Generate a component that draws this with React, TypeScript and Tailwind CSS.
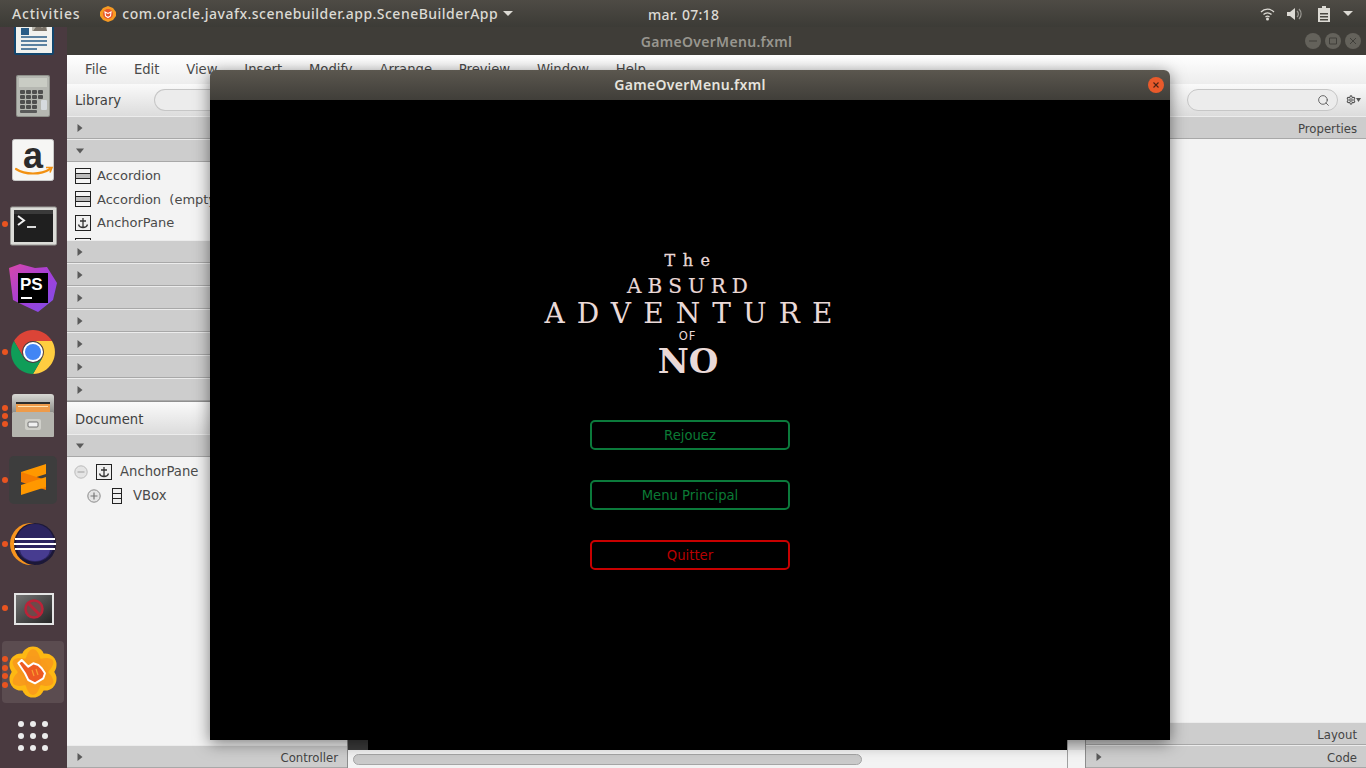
import { Search, Settings } from "lucide-react";

const RowArrow = ({ open }: { open?: boolean }) => (
  <svg width="8" height="8" viewBox="0 0 8 8" className="shrink-0">
    {open ? <path d="M0 1.5h8L4 6.5z" fill="#5a5a5a" /> : <path d="M1.5 0v8L6.5 4z" fill="#5a5a5a" />}
  </svg>
);

const PanelRow = ({ open, label }: { open?: boolean; label?: string }) => (
  <div className="flex h-[23px] shrink-0 items-center justify-between border-t border-b border-t-[#ececec] border-b-[#a8a8a8] bg-[#cdcdcd] pl-[9px] pr-[9px] text-[#444]">
    <RowArrow open={open} />
    {label && <span className="pt-[4px] text-[11.7px]">{label}</span>}
  </div>
);

const PanelHeader = ({ title }: { title: string }) => (
  <div className="flex h-[32px] shrink-0 items-center bg-gradient-to-b from-[#fafafa] to-[#dcdcdc] pl-2 text-[13.2px] text-[#3f3f3f]">
    <span className="pt-[2px]">{title}</span>
    <div className="ml-[33px] h-[22px] flex-1 rounded-l-full border border-r-0 border-[#c6c6c6] bg-[#ececec]" />
  </div>
);

const GridIcon = () => (
  <svg width="16" height="16" viewBox="0 0 16 16" className="shrink-0">
    <rect x="0.5" y="0.5" width="15" height="15" fill="#f4f4f4" stroke="#222" />
    <path d="M1 5.5h14M1 10.5h14" stroke="#222" />
    <rect x="1" y="6" width="14" height="4" fill="#bbb" />
  </svg>
);

const AnchorIcon = () => (
  <svg width="16" height="16" viewBox="0 0 16 16" className="shrink-0">
    <rect x="0.5" y="0.5" width="15" height="15" fill="#f0f0f0" stroke="#222" />
    <path d="M8 3v9M5 6h6M3.5 9.5c.5 2 2.5 3 4.5 3s4-1 4.5-3" fill="none" stroke="#333" strokeWidth="1.3" />
  </svg>
);

const VBoxIcon = () => (
  <svg width="10" height="16" viewBox="0 0 10 16" className="shrink-0">
    <rect x="0.5" y="0.5" width="9" height="15" fill="#eee" stroke="#222" />
    <path d="M0 5.5h10M0 10.5h10" stroke="#222" />
  </svg>
);

const LibraryItem = ({ label }: { label: string }) => (
  <div className="flex h-[23.5px] items-center gap-[6px] pl-2 text-[13px] whitespace-pre text-[#4a4a4a]">
    {label === "AnchorPane" ? <AnchorIcon /> : <GridIcon />}
    {label}
  </div>
);

const TreeToggle = ({ plus }: { plus?: boolean }) => (
  <svg width="14" height="14" viewBox="0 0 14 14" className="shrink-0">
    <circle cx="7" cy="7" r="6.2" fill="#e4e4e4" stroke={plus ? "#8a8a8a" : "#bbb"} />
    <path d={plus ? "M3.5 7h7M7 3.5v7" : "M3.5 7h7"} stroke={plus ? "#777" : "#aaa"} strokeWidth="1.2" />
  </svg>
);

const DockItem = ({ dots = 0, active, children }: { dots?: number; active?: boolean; children?: React.ReactNode }) => (
  <div className="relative flex h-16 w-[67px] shrink-0 items-center justify-center pr-[1px]">
    {active && <div className="absolute top-[1px] left-[2px] h-[62px] w-[62px] rounded-[4px] bg-[#5b4c50]" />}
    {dots > 0 && (
      <div className="absolute top-0 bottom-0 left-[2px] flex flex-col justify-center gap-[2.4px]">
        {Array.from({ length: dots }).map((_, i) => (
          <div key={i} className="h-[6px] w-[6px] rounded-full bg-[#e95420]" />
        ))}
      </div>
    )}
    <svg width="64" height="64" viewBox="0 0 64 64" className="relative">
      {children}
    </svg>
  </div>
);

const Dock = () => (
  <div className="flex w-[67px] shrink-0 flex-col overflow-hidden bg-[#4a3a40]">
    <div className="-mt-[27px]">
      <DockItem>
        <rect x="13" y="8" width="40" height="47" rx="2" fill="#12466e" />
        <rect x="15" y="10" width="36" height="43" fill="#f1f1ee" />
        <rect x="20" y="28" width="8" height="7" fill="#2a5c86" />
        <path d="M31 19h15v12H31z" fill="#b8b6ac" />
        <path d="M32 31l5-7 4 4 3-3 2 6z" fill="#7a7268" />
        <path d="M20 37h26M20 41h26M20 45h26M20 49h16" stroke="#2a5c86" strokeWidth="1.6" />
      </DockItem>
      <DockItem>
        <rect x="15" y="11" width="34" height="42" rx="2" fill="#8f918b" />
        <rect x="16" y="12" width="32" height="40" rx="1.5" fill="#b5b7b1" />
        <rect x="18" y="14" width="28" height="9" fill="#c9ccc4" />
        {[26, 31, 36, 41].map((y) =>
          [19, 25, 31].map((x) => <rect key={`${x}-${y}`} x={x} y={y} width="5" height="4" rx="1" fill="#4f4f4f" />),
        )}
        <rect x="37" y="26" width="5" height="4" rx="1" fill="#4f4f4f" />
        <rect x="37" y="31" width="5" height="4" rx="1" fill="#4f4f4f" />
        <rect x="40" y="36" width="6" height="10" rx="1" fill="#d5dade" />
        <rect x="19" y="46" width="17" height="3" rx="1" fill="#5a5a5a" />
      </DockItem>
      <DockItem>
        <rect x="11.5" y="11.5" width="41" height="41" rx="2" fill="#f6f6f4" stroke="#c8c8c8" />
        <text x="32" y="40" textAnchor="middle" fontFamily="'Liberation Sans', sans-serif" fontWeight="700" fontSize="36" fill="#2b2b2b">a</text>
        <path d="M15 41c9 6 25 6 34 0" fill="none" stroke="#f29111" strokeWidth="2.2" strokeLinecap="round" />
        <path d="M45 39.500l6 0-2 5" fill="none" stroke="#f29111" strokeWidth="1.6" />
      </DockItem>
      <DockItem dots={1}>
        <rect x="9.500" y="15" width="46" height="38" rx="1.500" fill="#dcdcd8" stroke="#9c9c98" />
        <rect x="13" y="18" width="39" height="32" fill="#1f1f1f" />
        <rect x="13" y="18" width="39" height="4" fill="#3a3a3a" />
        <path d="M17 24l6 4.500-6 4.500" fill="none" stroke="#f0f0f0" strokeWidth="2" />
        <path d="M26 35h9" stroke="#f0f0f0" strokeWidth="1.800" />
      </DockItem>
      <DockItem>
        <defs>
          <linearGradient id="ps" x1="0" y1="0" x2="1" y2="1">
            <stop offset="0" stopColor="#d848a8" />
            <stop offset="0.5" stopColor="#a63ed8" />
            <stop offset="1" stopColor="#7a50e8" />
          </linearGradient>
        </defs>
        <path d="M8 12l11-4 15 4 12-1 10 16-4 17-15 12-15-7-10-5z" fill="url(#ps)" />
        <rect x="17" y="17" width="30" height="30" fill="#000" />
        <text x="19" y="34" fontFamily="'Liberation Sans', sans-serif" fontWeight="700" fontSize="17" fill="#fff">PS</text>
        <rect x="20" y="41" width="11" height="2" fill="#fff" />
      </DockItem>
      <DockItem dots={1}>
        <path d="M13 21A22 22 0 0 1 51 21H32A11 11 0 0 0 22.500 37.500z" fill="#db4437" />
        <path d="M51 21A22 22 0 0 1 32 54L41.500 37.500A11 11 0 0 0 32 21z" fill="#ffcd40" />
        <path d="M32 54A22 22 0 0 1 13 21L22.500 37.500A11 11 0 0 0 41.500 37.500z" fill="#0f9d58" />
        <circle cx="32" cy="32" r="10" fill="#fff" />
        <circle cx="32" cy="32" r="8" fill="#4285f4" />
      </DockItem>
      <DockItem dots={3}>
        <defs>
          <linearGradient id="drawer" x1="0" y1="0" x2="0" y2="1">
            <stop offset="0" stopColor="#d8d8d4" />
            <stop offset="1" stopColor="#8f8f8b" />
          </linearGradient>
        </defs>
        <path d="M11 13a3 3 0 0 1 3-3h36a3 3 0 0 1 3 3v15H11z" fill="url(#drawer)" />
        <rect x="15" y="18" width="34" height="11" fill="#2c2c2c" />
        <rect x="15" y="20" width="34" height="9" fill="#ee9b4a" />
        <path d="M17 22.500h30" stroke="#ffe1ae" strokeWidth="1" />
        <rect x="11" y="28" width="42" height="25" rx="1" fill="#b4b4ae" />
        <rect x="24" y="35" width="16" height="11" rx="2" fill="#d0d0ca" />
        <rect x="27" y="38" width="10" height="5" rx="1" fill="#f0f0f0" stroke="#555" strokeWidth="0.8" />
      </DockItem>
      <DockItem dots={1}>
        <rect x="8" y="8" width="48" height="48" rx="5" fill="#3d3d3d" />
        <path d="M20 24l25-8v10l-25 8z" fill="#ff9800" />
        <path d="M20 24l25 8v10l-25-8z" fill="#f57c00" />
        <path d="M20 37l25-8v10l-25 8z" fill="#ff9800" />
      </DockItem>
      <DockItem dots={1}>
        <circle cx="30" cy="32" r="21" fill="#f7941e" />
        <circle cx="34" cy="32" r="21" fill="#1c1838" />
        <circle cx="34" cy="31" r="19" fill="#2c2560" />
        <path d="M19 37a15 12 0 0 0 30 0z" fill="#473c90" />
        <path d="M14 27h40M13 32h42M14 37h40" stroke="#fff" strokeWidth="2" />
      </DockItem>
      <DockItem dots={1}>
        <defs>
          <linearGradient id="blocked" x1="0" y1="0" x2="1" y2="1">
            <stop offset="0" stopColor="#737373" />
            <stop offset="1" stopColor="#262626" />
          </linearGradient>
        </defs>
        <rect x="13" y="17" width="40" height="32" fill="#e4e4e4" />
        <rect x="15" y="19" width="36" height="28" fill="url(#blocked)" />
        <circle cx="33" cy="33" r="8.500" fill="#6e4a4a" stroke="#bb2338" strokeWidth="2.500" />
        <path d="M27 27l12 12" stroke="#bb2338" strokeWidth="3" />
      </DockItem>
      <DockItem dots={4} active>
        {[
          [32, 18],
          [44, 25],
          [44, 39],
          [32, 46],
          [20, 39],
          [20, 25],
        ].map(([cx, cy]) => (
          <circle key={`${cx}-${cy}`} cx={cx} cy={cy} r="11.500" fill="#fdb813" />
        ))}
        <circle cx="32" cy="32" r="16" fill="#fbb016" />
        <ellipse cx="32" cy="32" rx="9" ry="23" fill="#f7941e" opacity="0.75" />
        <ellipse cx="32" cy="32" rx="9" ry="23" fill="#f7941e" opacity="0.75" transform="rotate(60 32 32)" />
        <ellipse cx="32" cy="32" rx="9" ry="23" fill="#f7941e" opacity="0.75" transform="rotate(120 32 32)" />
        <path d="M17.300 23.300L20.700 20L27.300 26.700L32.300 23.300L37.300 25L40.700 28.300L44 33.300L42.300 38.300L34 43.300L27.300 40L24 33.300z" fill="#ee5a22" stroke="#fff" strokeWidth="2" strokeLinejoin="round" />
        <path d="M31 30l2 6M35 29l2 6" stroke="#f8a030" strokeWidth="1.200" />
      </DockItem>
      <DockItem>
        {[20, 32, 44].map((y) =>
          [20, 32, 44].map((x) => <circle key={`${x}-${y}`} cx={x} cy={y} r="3" fill="#ececec" />),
        )}
      </DockItem>
    </div>
  </div>
);

const LeftPanel = () => (
  <div className="flex w-[280px] shrink-0 flex-col bg-[#f3f3f3]">
    <PanelHeader title="Library" />
    <PanelRow />
    <PanelRow open />
    <div className="h-[78px] shrink-0 overflow-hidden pt-[2px]">
      <LibraryItem label="Accordion" />
      <LibraryItem label="Accordion  (empty)" />
      <LibraryItem label="AnchorPane" />
      <div className="mt-[3px] pl-2"><GridIcon /></div>
    </div>
    {[0, 1, 2, 3, 4, 5, 6].map((i) => (
      <PanelRow key={i} />
    ))}
    <div className="flex h-[33px] shrink-0 items-center border-t border-[#8f8f8f] bg-gradient-to-b from-[#fafafa] to-[#dcdcdc] pt-[3px] pl-2 text-[13.2px] text-[#3f3f3f]">
      Document
    </div>
    <PanelRow open />
    <div className="flex h-[24px] items-center pt-[6px] pl-[7px] text-[13.2px] text-[#4a4a4a]">
      <TreeToggle />
      <div className="ml-[8px] mr-[8px]"><AnchorIcon /></div>
      AnchorPane
    </div>
    <div className="flex h-[24px] items-center pt-[5px] pl-[20px] text-[13.2px] text-[#4a4a4a]">
      <TreeToggle plus />
      <div className="ml-[11px] mr-[11px]"><VBoxIcon /></div>
      VBox
    </div>
    <div className="flex-1" />
    <PanelRow label="Controller" />
  </div>
);

const Center = () => (
  <div className="flex min-w-0 flex-1 flex-col border-l border-[#8d8d8d]">
    <div className="flex flex-1">
      <div className="w-[20px] bg-[#3a3a3a]" />
      <div className="flex-1 bg-black" />
      <div className="w-[18px] border-l border-[#a0a0a0] bg-[#dedede]" />
    </div>
    <div className="flex h-[18px] shrink-0 items-center bg-[#f3f3f3] pl-[5px]">
      <div className="h-[11px] w-[509px] rounded-full border border-[#a5a5a5] bg-[#cacaca]" />
      <div className="ml-auto h-full w-[18px] border-l border-[#a0a0a0]" />
    </div>
  </div>
);

const RightPanel = () => (
  <div className="flex w-[281px] shrink-0 flex-col border-l border-[#8d8d8d] bg-[#f3f3f3]">
    <div className="flex h-[32px] shrink-0 items-center bg-gradient-to-b from-[#fafafa] to-[#dcdcdc] pl-[101px]">
      <div className="flex h-[22px] w-[151px] items-center justify-end rounded-full border border-[#c6c6c6] bg-[#ececec] pr-[7px]">
        <Search size={13} strokeWidth={1.6} color="#555" />
      </div>
      <Settings size={10} strokeWidth={2.6} color="#555" className="ml-[8px]" />
      <svg width="5" height="4" viewBox="0 0 5 4"><path d="M0 0h5L2.500 4z" fill="#555" /></svg>
    </div>
    <PanelRow label="Properties" />
    <div className="flex-1" />
    <PanelRow label="Layout" />
    <PanelRow label="Code" />
  </div>
);

const SceneWindowButton = ({ d }: { d: string }) => (
  <svg width="16" height="16" viewBox="0 0 16 16">
    <circle cx="8" cy="8" r="8" fill="#64625b" />
    <path d={d} fill="none" stroke="#403f3a" strokeWidth="1" />
  </svg>
);

const MENU_ITEMS = ["File", "Edit", "View", "Insert", "Modify", "Arrange", "Preview", "Window", "Help"];

const GameOverWindow = () => (
  <div className="absolute top-[70px] left-[210px] flex h-[670px] w-[960px] flex-col overflow-hidden rounded-t-[6px] shadow-[0_3px_16px_rgba(0,0,0,0.5)]">
    <div className="relative flex h-[30px] shrink-0 items-center justify-center bg-gradient-to-b from-[#5b574f] to-[#403e39] pb-[1px] font-['Noto_Sans',sans-serif] text-[14px] font-semibold tracking-[0.3px] text-[#e6e4de]">
      GameOverMenu.fxml
      <div className="absolute top-[7px] right-[6px] flex h-4 w-4 items-center justify-center rounded-full bg-[#e95a2b]">
        <svg width="8" height="8" viewBox="0 0 8 8"><path d="M1.500 1.500l5 5M6.500 1.500l-5 5" stroke="#4a2315" strokeWidth="1.100" /></svg>
      </div>
    </div>
    <div className="flex flex-1 flex-col items-center bg-black pt-[149px] font-['DejaVu_Sans',sans-serif]">
      <div className="flex flex-col items-center font-['DejaVu_Serif',serif] text-[#ead9d7]">
        <div className="-mr-[2px] h-[24px] text-[16px] leading-[24px] tracking-[7.5px] [-webkit-text-stroke:0.3px_#ead9d7]">The</div>
        <div className="-mr-[1px] h-[25px] text-[20px] leading-[26px] tracking-[6px] [-webkit-text-stroke:0.2px_#ead9d7]">ABSURD</div>
        <div className="-mr-[9px] h-[32px] text-[28px] leading-[31px] tracking-[12.1px]">ADVENTURE</div>
        <div className="mr-[5px] h-[10px] font-['DejaVu_Sans',sans-serif] text-[11.5px] leading-[12px] tracking-[0.8px]">OF</div>
        <div className="-ml-[4px] h-[42px] text-[34px] leading-[42px] font-bold">NO</div>
      </div>
      <div className="mt-[38px] flex flex-col gap-[30px] text-[13.2px]">
        <button className="h-[30px] w-[200px] rounded-[5px] border-2 border-[#0b7a3b] pt-[1px] text-[#0b7a35]">Rejouez</button>
        <button className="h-[30px] w-[200px] rounded-[5px] border-2 border-[#0b7a3b] pt-[1px] text-[#0b7a35]">Menu Principal</button>
        <button className="h-[30px] w-[200px] rounded-[5px] border-2 border-[#c80000] pt-[1px] text-[#b80000]">Quitter</button>
      </div>
    </div>
  </div>
);

export default function App() {
  return (
    <div className="relative flex h-[768px] w-[1366px] flex-col overflow-hidden font-['DejaVu_Sans',sans-serif]">
      <div className="flex h-[27px] shrink-0 items-center bg-gradient-to-b from-[#4e4b45] to-[#3c3b36] pl-[12px] font-['Noto_Sans',sans-serif] text-[14px] font-medium text-[#dcdad4]">
        <span className="tracking-[0.8px]">Activities</span>
        <svg width="18" height="18" viewBox="0 0 18 18" className="ml-[19px]">
          <path d="M9 1l5 2 3 4v4l-3 4-5 2-5-2-3-4V7l3-4z" fill="#f59a23" />
          <circle cx="9" cy="9" r="5" fill="#e8552c" />
          <path d="M6 7l3 1.500L12 7l-.500 4L9 12.500 6.500 11z" fill="none" stroke="#fff" strokeWidth="1.100" />
        </svg>
        <span className="ml-[5px] tracking-[0.48px]">com.oracle.javafx.scenebuilder.app.SceneBuilderApp</span>
        <svg width="10" height="5" viewBox="0 0 10 5" className="ml-[5px]"><path d="M0 0h10L5 5z" fill="#dcdad4" /></svg>
        <span className="absolute top-[4px] left-[648px] tracking-[0.3px]">mar. 07:18</span>
        <div className="ml-auto flex items-center pr-[13px]">
          <svg width="15" height="14" viewBox="0 0 15 14"><path d="M1 5a9 9 0 0 1 13 0M3.500 7.500a6 6 0 0 1 8 0M5.500 10a3 3 0 0 1 4 0" fill="none" stroke="#dcdad4" strokeWidth="1.300" /><circle cx="7.500" cy="12" r="1.500" fill="#dcdad4" /></svg>
          <svg width="16" height="14" viewBox="0 0 16 14" className="ml-[12px]"><path d="M0 5h3l5-4v12L3 9H0z" fill="#dcdad4" /><path d="M10 4a4 4 0 0 1 0 6M12 2a7 7 0 0 1 0 10" fill="none" stroke="#9c9a94" strokeWidth="1.200" /></svg>
          <svg width="12" height="16" viewBox="0 0 12 16" className="ml-[15px]"><path d="M4 0h4v2h4v14H0V2h4z" fill="#dcdad4" /><path d="M2 7h8v1.500H2zM2 10h8v1.500H2zM2 13h8v1.500H2z" fill="#4a4842" /></svg>
          <svg width="10" height="5" viewBox="0 0 10 5" className="ml-[13px]"><path d="M0 0h10L5 5z" fill="#dcdad4" /></svg>
        </div>
      </div>
      <div className="flex min-h-0 flex-1">
        <Dock />
        <div className="flex min-w-0 flex-1 flex-col">
          <div className="relative flex h-[28px] shrink-0 items-center justify-center bg-[#3f3d38] font-['Noto_Sans',sans-serif] text-[14px] font-semibold tracking-[0.3px] text-[#98968f]">
            GameOverMenu.fxml
            <div className="absolute top-[6px] right-[5px] flex gap-[4px]">
              <SceneWindowButton d="M4 8h8" />
              <SceneWindowButton d="M4.500 5h7v6h-7z" />
              <SceneWindowButton d="M5 5l6 6M11 5l-6 6" />
            </div>
          </div>
          <div className="flex h-[29px] shrink-0 items-center gap-[26.8px] bg-gradient-to-b from-[#ffffff] to-[#ededed] pt-[1px] pl-[18px] text-[13.2px] text-[#4a4a4a]">
            {MENU_ITEMS.map((item) => (
              <span key={item}>{item}</span>
            ))}
          </div>
          <div className="flex min-h-0 flex-1">
            <LeftPanel />
            <Center />
            <RightPanel />
          </div>
        </div>
      </div>
      <GameOverWindow />
    </div>
  );
}
